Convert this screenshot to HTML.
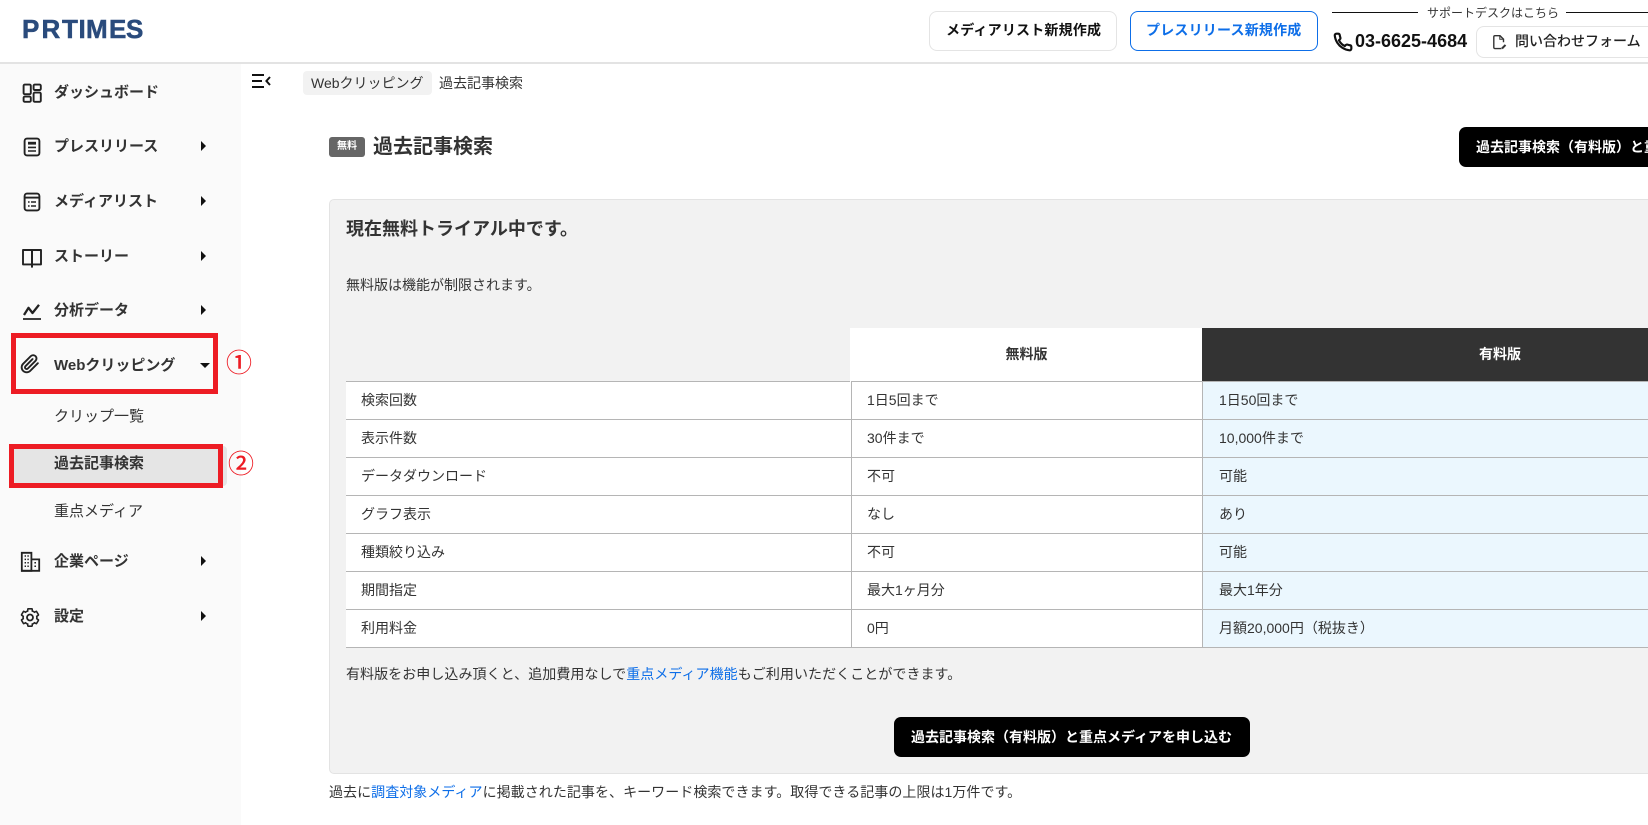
<!DOCTYPE html>
<html lang="ja">
<head>
<meta charset="utf-8">
<title>過去記事検索</title>
<style>
*{box-sizing:border-box}
html,body{margin:0;padding:0;width:1648px;height:825px;overflow:hidden;background:#fff}
body{position:relative;font-family:"Liberation Sans","Noto Sans CJK JP",sans-serif;color:#333;font-size:14px}
.t{position:absolute;white-space:nowrap;line-height:20px;height:20px}
.a{position:absolute}
.nav{font-size:15px;font-weight:700;left:54px;color:#333}
.sub{font-size:15px;left:54px;color:#333}
.ri{position:absolute;left:201px;width:0;height:0;border-left:5.5px solid #111;border-top:5.5px solid transparent;border-bottom:5.5px solid transparent}
svg{position:absolute;overflow:visible}
a{color:#0d6ee8;text-decoration:none}
table{position:absolute;left:346px;top:328px;width:1302px;border-collapse:separate;border-spacing:0;table-layout:fixed;font-size:14px}
th{height:54px;font-weight:700;border-bottom:1px solid #b5b5b5;padding:0 0 2px;text-align:center;font-size:14px}
td{height:38px;border-bottom:1px solid #b5b5b5;background:#fff;padding:0 0 2px 15px;line-height:20px;white-space:nowrap}
td+td{border-left:1px solid #b5b5b5}
td+td+td{background:#ebf7fe;padding-left:16px}
.blk{position:absolute;background:#000;color:#fff;font-weight:700;font-size:14px;border-radius:7px;height:40px;line-height:40px;white-space:nowrap;overflow:hidden}
.c{font-size:26px;font-weight:500;height:30px;line-height:30px;color:#ed1c24;font-family:"Noto Sans CJK JP",sans-serif}
</style>
</head>
<body>

<!-- header -->
<div class="a" style="left:0;top:62px;width:1648px;height:1.5px;background:#e3e3e3"></div>
<svg style="left:0;top:14px" width="150" height="30" viewBox="0 0 150 30"><text x="22 41.5 62 78.5 86 109 126" y="24" font-family="Liberation Sans" font-weight="700" font-size="26" fill="#2a4b7c" stroke="#2a4b7c" stroke-width=".5">PRTIMES</text></svg>

<div class="a" style="left:929px;top:11px;width:188px;height:40px;border:1px solid #e4e4e4;border-radius:8px"></div>
<div class="t" style="left:946px;top:20px;font-size:14px;font-weight:700;color:#111;letter-spacing:.2px">メディアリスト新規作成</div>
<div class="a" style="left:1130px;top:11px;width:188px;height:40px;border:1px solid #0d6ee8;border-radius:8px"></div>
<div class="t" style="left:1146px;top:20px;font-size:14px;font-weight:700;color:#0d6ee8;letter-spacing:.2px">プレスリリース新規作成</div>

<div class="a" style="left:1332px;top:12px;width:86px;height:1px;background:#111"></div>
<div class="t" style="left:1427px;top:3px;font-size:12px;color:#333">サポートデスクはこちら</div>
<div class="a" style="left:1566px;top:12px;width:82px;height:1px;background:#111"></div>

<svg style="left:1333px;top:32px" width="20" height="20" viewBox="0 0 24 24" fill="none" stroke="#111" stroke-width="2.6" stroke-linejoin="round"><path d="M22 19.5v.5a2 2 0 0 1-2.18 2 19.79 19.79 0 0 1-8.63-3.07 19.5 19.5 0 0 1-6-6 19.79 19.79 0 0 1-3.07-8.67A2 2 0 0 1 4.11 2h2a2 2 0 0 1 2 1.72 12.84 12.84 0 0 0 .7 2.81 2 2 0 0 1-.45 2.11L7.09 9.91a16 16 0 0 0 7 7l1.27-1.27a2 2 0 0 1 2.11-.45 12.84 12.84 0 0 0 2.81.7A2 2 0 0 1 22 17.92z"/></svg>
<div class="t" style="left:1355px;top:31px;font-size:18px;font-weight:700;color:#111">03-6625-4684</div>

<div class="a" style="left:1476px;top:26px;width:172px;height:32px;border:1px solid #e4e4e4;border-right:0;border-radius:8px 0 0 8px"></div>
<svg style="left:1492px;top:35px" width="15" height="15" viewBox="0 0 15 15" fill="none" stroke="#333" stroke-width="1.4"><path d="M9.5 13.6H3a1.2 1.2 0 0 1-1.2-1.2V1.8A1.2 1.2 0 0 1 3 .7h5l3.5 3.5v3"/><path d="M7.8.7v3.6h3.6" stroke-width="1"/><path d="M10 13.5l3.5-3.6" stroke-width="2"/></svg>
<div class="t" style="left:1515px;top:31px;font-size:14px;font-weight:500;color:#222">問い合わせフォーム</div>

<!-- sidebar -->
<div class="a" style="left:0;top:64px;width:241px;height:761px;background:#fafafa"></div>

<svg style="left:22px;top:83px" width="20" height="20" viewBox="0 0 20 20" fill="none" stroke="#222" stroke-width="1.9"><rect x="1.6" y="1.6" width="7.2" height="9.6" rx="1.2"/><rect x="1.6" y="13.6" width="7.2" height="5.2" rx="1.2"/><rect x="11.6" y="1.6" width="7.2" height="5.4" rx="1.2"/><rect x="11.6" y="9.6" width="7.2" height="9.2" rx="1.2"/></svg>
<div class="t nav" style="top:83px">ダッシュボード</div>

<svg style="left:23px;top:137px" width="18" height="20" viewBox="0 0 18 20" fill="none" stroke="#222" stroke-width="1.9"><rect x="1.6" y="1.6" width="14.8" height="16.8" rx="2.4"/><path d="M5 6.2h8" stroke-width="2.8"/><path d="M5 10.4h8M5 14h8" stroke-width="1.6"/></svg>
<div class="t nav" style="top:137px">プレスリリース</div>
<div class="ri" style="top:141px"></div>

<svg style="left:23px;top:192px" width="18" height="20" viewBox="0 0 18 20" fill="none" stroke="#222" stroke-width="1.9"><rect x="1.6" y="1.6" width="14.8" height="16.8" rx="2.4"/><path d="M1.6 5.6h14.8"/><path d="M5 10h1.6M8 10h5M5 14h1.6M8 14h5" stroke-width="1.6"/></svg>
<div class="t nav" style="top:192px">メディアリスト</div>
<div class="ri" style="top:196px"></div>

<svg style="left:22px;top:248px" width="20" height="20" viewBox="0 0 20 20" fill="none" stroke="#222" stroke-width="1.9" stroke-linejoin="round"><path d="M1 2h18v14.4H1z"/><path d="M10 2v17.6" stroke-width="2"/></svg>
<div class="t nav" style="top:247px">ストーリー</div>
<div class="ri" style="top:251px"></div>

<svg style="left:23px;top:303px" width="19" height="18" viewBox="0 0 19 18" fill="none" stroke="#222" stroke-width="2.3" stroke-linejoin="round"><path d="M1 12l4.5-7.2L9.5 10 16 1.8"/><path d="M0 16h18" stroke-width="1.8"/></svg>
<div class="t nav" style="top:301px">分析データ</div>
<div class="ri" style="top:305px"></div>

<svg style="left:20px;top:354px" width="20" height="20" viewBox="0 0 24 24" fill="none" stroke="#222" stroke-width="2.3" stroke-linecap="round" stroke-linejoin="round"><path d="M21.44 11.05l-9.19 9.19a6 6 0 0 1-8.49-8.49l9.19-9.19a4 4 0 0 1 5.66 5.66l-9.2 9.19a2 2 0 0 1-2.83-2.83l8.49-8.48"/></svg>
<div class="t nav" style="top:356px">Webクリッピング</div>
<div class="a" style="left:200px;top:363px;width:0;height:0;border-top:5px solid #111;border-left:5.5px solid transparent;border-right:5.5px solid transparent"></div>

<div class="a" style="left:11px;top:333px;width:207px;height:61px;border:5px solid #ed1c24"></div>
<div class="t c" style="left:226px;top:347px">①</div>

<div class="t sub" style="top:407px">クリップ一覧</div>
<div class="a" style="left:11px;top:446px;width:216px;height:40px;background:#e5e5e5;border-radius:4px"></div>
<div class="a" style="left:9px;top:444px;width:214px;height:44px;border:5px solid #ed1c24"></div>
<div class="t sub" style="top:454px;font-weight:700">過去記事検索</div>
<div class="t c" style="left:228px;top:448px">②</div>
<div class="t sub" style="top:502px">重点メディア</div>

<svg style="left:20px;top:551px" width="21" height="21" viewBox="0 0 21 21" fill="none" stroke="#222" stroke-width="1.8"><path d="M1.8 19.8V1.8h9.6v18z"/><path d="M11.4 8.4h7.8v11.4H1"/><path d="M4.6 5h1.4M7.4 5h1.4M4.6 8.4h1.4M7.4 8.4h1.4M4.6 11.8h1.4M7.4 11.8h1.4M4.6 15.2h1.4M7.4 15.2h1.4M14.4 11.8h1.6M14.4 15.2h1.6" stroke-width="1.5"/></svg>
<div class="t nav" style="top:552px">企業ページ</div>
<div class="ri" style="top:556px"></div>

<svg style="left:20px;top:607px" width="20" height="21" viewBox="0 0 20 21"><g fill="#222"><circle cx="10" cy="10.5" r="7.7"/><g><rect x="7" y="1" width="6" height="5" rx="1.2"/><rect x="7" y="1" width="6" height="5" rx="1.2" transform="rotate(60 10 10.5)"/><rect x="7" y="1" width="6" height="5" rx="1.2" transform="rotate(120 10 10.5)"/><rect x="7" y="1" width="6" height="5" rx="1.2" transform="rotate(180 10 10.5)"/><rect x="7" y="1" width="6" height="5" rx="1.2" transform="rotate(240 10 10.5)"/><rect x="7" y="1" width="6" height="5" rx="1.2" transform="rotate(300 10 10.5)"/></g></g><g fill="#fafafa"><circle cx="10" cy="10.5" r="6.1"/><rect x="8.5" y="2.6" width="3" height="5"/><rect x="8.5" y="2.6" width="3" height="5" transform="rotate(60 10 10.5)"/><rect x="8.5" y="2.6" width="3" height="5" transform="rotate(120 10 10.5)"/><rect x="8.5" y="2.6" width="3" height="5" transform="rotate(180 10 10.5)"/><rect x="8.5" y="2.6" width="3" height="5" transform="rotate(240 10 10.5)"/><rect x="8.5" y="2.6" width="3" height="5" transform="rotate(300 10 10.5)"/></g><circle cx="10" cy="10.5" r="3" fill="none" stroke="#222" stroke-width="1.8"/></svg>
<div class="t nav" style="top:607px">設定</div>
<div class="ri" style="top:611px"></div>

<!-- toggle -->
<svg style="left:252px;top:74px" width="19" height="14" viewBox="0 0 19 14" fill="none" stroke="#111" stroke-width="2"><path d="M0 1h12M0 7h10M0 13h12"/><path d="M18 3l-3.6 4 3.6 4" stroke-width="2"/></svg>

<!-- breadcrumb -->
<div class="a" style="left:303px;top:71px;width:129px;height:24px;background:#f2f2f2;border-radius:4px"></div>
<div class="t" style="left:311px;top:73px;font-size:14px">Webクリッピング</div>
<div class="t" style="left:439px;top:73px;font-size:14px">過去記事検索</div>

<!-- title -->
<div class="a" style="left:329px;top:137px;width:36px;height:20px;background:#666;border-radius:3px;color:#fff;font-size:10px;line-height:20px;text-align:center;font-weight:700">無料</div>
<div class="t" style="left:373px;top:134px;height:26px;line-height:26px;font-size:20px;font-weight:700">過去記事検索</div>

<div class="blk" style="left:1459px;top:127px;width:189px;padding-left:17px;border-radius:7px 0 0 7px">過去記事検索（有料版）と重点メディアを申し込む</div>

<!-- panel -->
<div class="a" style="left:329px;top:199px;width:1319px;height:575px;background:#f2f2f2;border:1px solid #e3e3e3;border-right:0;border-radius:5px 0 0 5px"></div>
<div class="t" style="left:346px;top:217px;height:24px;line-height:24px;font-size:18px;font-weight:700">現在無料トライアル中です。</div>
<div class="t" style="left:346px;top:275px;font-size:14px">無料版は機能が制限されます。</div>

<table>
<colgroup><col style="width:505px"><col style="width:351px"><col></colgroup>
<tr><th></th><th style="background:#fff;box-shadow:-1px 0 0 #fff">無料版</th><th style="background:#333;color:#fff;padding-left:150px">有料版</th></tr>
<tr><td>検索回数</td><td>1日5回まで</td><td>1日50回まで</td></tr>
<tr><td>表示件数</td><td>30件まで</td><td>10,000件まで</td></tr>
<tr><td>データダウンロード</td><td>不可</td><td>可能</td></tr>
<tr><td>グラフ表示</td><td>なし</td><td>あり</td></tr>
<tr><td>種類絞り込み</td><td>不可</td><td>可能</td></tr>
<tr><td>期間指定</td><td>最大1ヶ月分</td><td>最大1年分</td></tr>
<tr><td>利用料金</td><td>0円</td><td>月額20,000円（税抜き）</td></tr>
</table>

<div class="t" style="left:346px;top:664px;font-size:14px;letter-spacing:.06px">有料版をお申し込み頂くと、追加費用なしで<a>重点メディア機能</a>もご利用いただくことができます。</div>

<div class="blk" style="left:894px;top:717px;width:356px;padding-left:17px">過去記事検索（有料版）と重点メディアを申し込む</div>

<div class="t" style="left:329px;top:782px;font-size:14px;letter-spacing:.05px">過去に<a>調査対象メディア</a>に掲載された記事を、キーワード検索できます。取得できる記事の上限は1万件です。</div>

</body>
</html>
